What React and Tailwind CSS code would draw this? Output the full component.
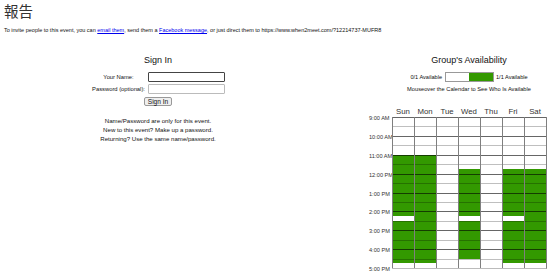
const days = ['Sun', 'Mon', 'Tue', 'Wed', 'Thu', 'Fri', 'Sat'];
const hours = ['9:00 AM', '10:00 AM', '11:00 AM', '12:00 PM', '1:00 PM', '2:00 PM', '3:00 PM', '4:00 PM', '5:00 PM'];

// 15-minute slots from 9:00 AM, [from, to] inclusive, plus slots left free
const avail = {
    Sun: { from: 8, to: 30, gaps: [21] },
    Mon: { from: 8, to: 30, gaps: [] },
    Tue: null,
    Wed: { from: 11, to: 29, gaps: [21] },
    Thu: null,
    Fri: { from: 11, to: 30, gaps: [21] },
    Sat: { from: 11, to: 30, gaps: [] },
};

function isFree(day, i) {
    const a = avail[day];
    if (!a) return false;
    return i >= a.from && i <= a.to && !a.gaps.includes(i);
}

function Slot({ day, i }) {
    let line = 'border-t-0';
    if (i % 4 === 0) line = 'border-t border-t-black/60';
    else if (i % 4 === 2) line = 'border-t border-t-black/25';
    const bg = isFree(day, i) ? 'bg-[#339900]' : 'bg-white';
    return <div className={`h-[4.72px] ${line} ${bg}`} />;
}

export default function App() {
    const slots = Array.from({ length: 32 }, (_, i) => i);

    return (
        <div className="w-[554px] h-[276px] overflow-hidden bg-white text-[#111] font-['Liberation_Sans',Arial,sans-serif]">
            <h1 className="pl-[4px] pt-[3px] text-[14.5px] leading-[18px] text-[#333] font-['Liberation_Sans','Noto_Sans_CJK_JP',sans-serif]">報告</h1>
            <p className="pl-[4px] mt-[5px] text-[5.5px] leading-[8px] whitespace-nowrap">
                To invite people to this event, you can <a href="#" className="text-[#0000ee] underline">email them</a>, send them a <a href="#" className="text-[#0000ee] underline">Facebook message</a>, or just direct them to https://www.when2meet.com/?12214737-MUFR8
            </p>

            <div className="flex mt-[20px]">
                <div className="w-[316px] flex flex-col items-center">
                    <h2 className="text-[9px] leading-[12px]">Sign In</h2>
                    <div className="mt-[6px] grid grid-cols-[55px_77px] gap-x-[2px] gap-y-[2px] items-center text-[5.8px]">
                        <span className="text-center whitespace-nowrap">Your Name:</span>
                        <input className="h-[10px] border border-[#444] rounded-[1px] outline-none" />
                        <span className="text-center whitespace-nowrap">Password (optional):</span>
                        <input type="password" className="h-[10px] border border-[#bbb] rounded-[1px] outline-none" />
                    </div>
                    <button className="mt-[2.5px] h-[9.5px] px-[3px] text-[6.6px] leading-[7px] bg-[#efefef] border border-[#999] rounded-[2px]">Sign In</button>
                    <div className="mt-[9.5px] text-[6.1px] leading-[9px] text-center">
                        <p>Name/Password are only for this event.</p>
                        <p>New to this event? Make up a password.</p>
                        <p>Returning? Use the same name/password.</p>
                    </div>
                </div>

                <div className="ml-[76px] w-[154px] flex flex-col items-center">
                    <h2 className="text-[9px] leading-[12px] whitespace-nowrap">Group's Availability</h2>
                    <div className="mt-[6px] flex items-center gap-[2.5px] text-[5.6px] whitespace-nowrap">
                        <span>0/1 Available</span>
                        <div className="w-[49px] h-[10px] flex border border-[#999]">
                            <div className="flex-1 bg-white" />
                            <div className="flex-1 bg-[#339900]" />
                        </div>
                        <span>1/1 Available</span>
                    </div>
                    <p className="mt-[3px] text-[5.7px] leading-[8px] whitespace-nowrap">Mouseover the Calendar to See Who Is Available</p>

                    <div className="mt-[14px] flex w-[154px] text-[7.8px] leading-[9px] text-[#333]">
                        {days.map((d) => (
                            <div key={d} className="w-[22px] text-center">{d}</div>
                        ))}
                    </div>

                    <div className="mt-[1px] flex w-[154px]">
                        <div className="-ml-[23px] w-[23px] shrink-0 -mt-[2px] text-[5.6px] leading-[6px] text-[#333] whitespace-nowrap">
                            {hours.map((h) => (
                                <div key={h} className="h-[18.88px]">{h}</div>
                            ))}
                        </div>
                        <div className="relative z-10 flex bg-white border-r border-r-black/50 border-b border-b-[#bbb] self-start">
                            {days.map((d) => (
                                <div key={d} className="w-[22px] border-l border-l-black/50 flex flex-col">
                                    {slots.map((i) => (
                                        <Slot key={i} day={d} i={i} />
                                    ))}
                                </div>
                            ))}
                        </div>
                    </div>
                </div>
            </div>
        </div>
    );
}
